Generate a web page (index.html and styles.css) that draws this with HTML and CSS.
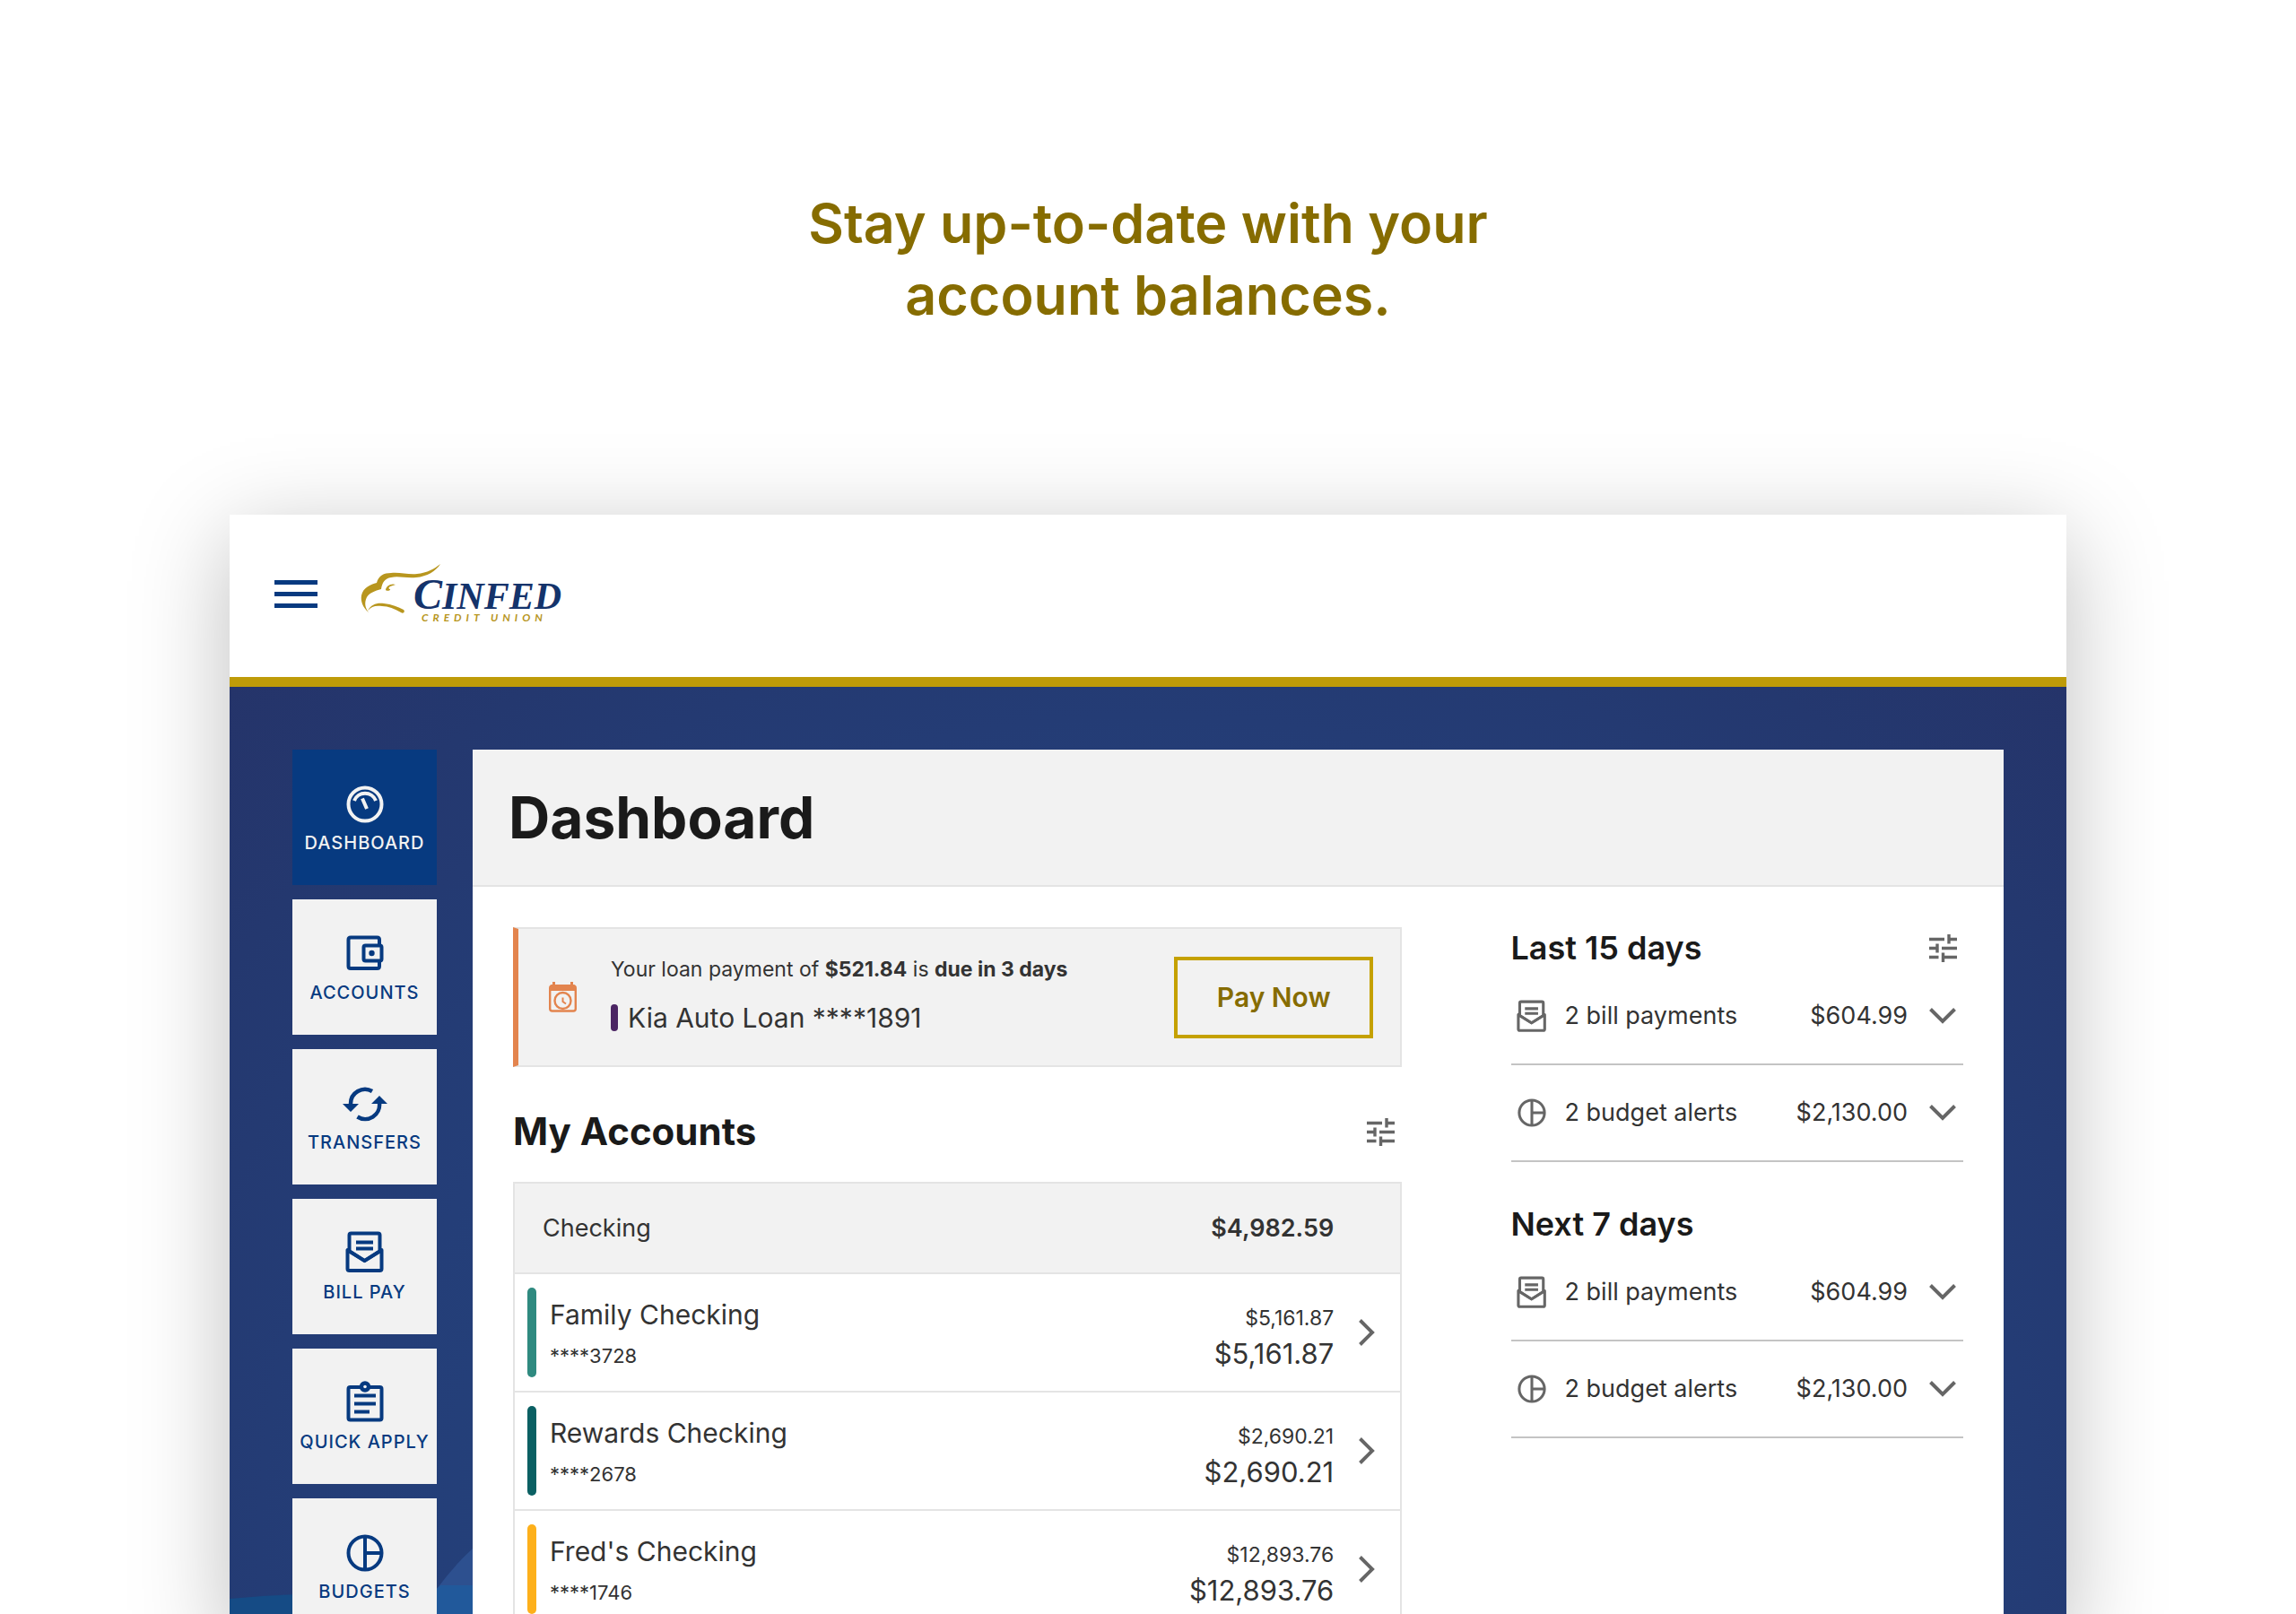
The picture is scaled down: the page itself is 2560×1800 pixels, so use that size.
FILE: index.html
```html
<!DOCTYPE html>
<html lang="en">
<head>
    <meta charset="UTF-8">
    <meta name="viewport" content="width=device-width, initial-scale=1.0">
    <title>Cinfed Credit Union</title>
    <link rel="stylesheet" href="styles.css">
</head>
<body>
    <!-- Shared icons -->
    <svg class="sprite" aria-hidden="true">
        <symbol id="icon-mail" viewBox="0 0 44 46">
            <path d="M2.500 21V42Q2.500 44 4.500 44H38.500Q40.500 44 40.500 42V21L21.500 33Z" fill="none" stroke="currentColor" stroke-width="4" stroke-linejoin="round"/>
            <path d="M5 20V6H38V20L21.500 31Z" fill="var(--icon-back)"/>
            <path d="M4.500 21V4.500Q4.500 2.500 6.500 2.500H36.500Q38.500 2.500 38.500 4.500V21M3 21.500L21.500 33L40 21.500" fill="none" stroke="currentColor" stroke-width="4"/>
            <path d="M12 12.500H31M12 19.500H31" stroke="currentColor" stroke-width="4"/>
        </symbol>
        <symbol id="icon-budget" viewBox="0 0 42 42">
            <circle cx="21" cy="21" r="18.500" fill="none" stroke="currentColor" stroke-width="4"/>
            <path d="M21 3V39M21 21H39" stroke="currentColor" stroke-width="4"/>
        </symbol>
        <symbol id="icon-tune" viewBox="0 0 31 31">
            <path d="M0 5.500H17M22 0V10.500M23 5.500H31M0 15.500H9M9 10.500V20.500M14 15.500H31M0 25.500H10.500M15.500 20.500V31M16 25.500H31" fill="none" stroke="currentColor" stroke-width="3.400"/>
        </symbol>
        <symbol id="icon-down" viewBox="0 0 30 18">
            <path d="M1.500 1.500L15 15L28.500 1.500" fill="none" stroke="currentColor" stroke-width="4"/>
        </symbol>
        <symbol id="icon-right" viewBox="0 0 18 30">
            <path d="M1.500 1.500L15 15L1.500 28.500" fill="none" stroke="currentColor" stroke-width="4"/>
        </symbol>
    </svg>

    <h1 class="headline">Stay up-to-date with your<br>account balances.</h1>

    <div class="window">
        <header class="topbar">
            <button class="menu-button" type="button" aria-label="Menu">
                <span></span>
                <span></span>
                <span></span>
            </button>
            <a class="logo" href="#" aria-label="Cinfed Credit Union">
                <svg viewBox="0 0 226 68" width="226" height="68">
                    <g fill="#b8961e">
                        <path d="M9 55C2 49 0 42 1 36C3 27 11 24 18 22C20 14 26 11 34 11C44 10 53 13 63 12C74 11 83 6 89 1C84 9 74 15 62 16C50 17 42 14 34 16C27 17 24 22 23 29C16 31 10 33 7 38C4 44 5 50 9 55Z"/>
                        <path d="M8 53C12 46 18 44 26 45C35 46 42 49 48 52C50 54 48 57 45 55C38 51 31 48 24 48C17 47 12 48 8 53Z"/>
                        <path d="M39 24C34 22 28 26 28 30C30 32 34 30 33 29C31 29 31 27 33 26Z"/>
                    </g>
                    <text class="logo-name" x="59" y="51"><tspan font-size="48">C</tspan><tspan font-size="42">INFED</tspan></text>
                    <text class="logo-sub" x="68" y="65">CREDIT UNION</text>
                </svg>
            </a>
        </header>

        <div class="stage">
            <svg class="waves" viewBox="0 0 2048 1034" preserveAspectRatio="none" aria-hidden="true">
                <path d="M231 1006Q250 980 271 961H300V1034H231Z" fill="#2d508f"/>
                <path d="M0 1017Q40 1013 80 1012V1034H0Z" fill="#154b85"/>
                <path d="M231 1006L235 1002H300V1034H231Z" fill="#21599b"/>
            </svg>

            <nav class="sidebar">
                <a class="nav-item active" href="#">
                    <svg viewBox="0 0 42 42" width="42" height="42">
                        <circle cx="21" cy="21" r="18.500" fill="none" stroke="currentColor" stroke-width="4"/>
                        <path d="M9 17C13 6 29 6 33 17M18 14.500L23 26" fill="none" stroke="currentColor" stroke-width="4"/>
                    </svg>
                    Dashboard
                </a>
                <a class="nav-item" href="#">
                    <svg viewBox="0 0 42 42" width="42" height="42">
                        <path d="M37 10V5Q37 2.500 34.500 2.500H5Q2.500 2.500 2.500 5V34.500Q2.500 37 5 37H34.500Q37 37 37 34.500V30" fill="none" stroke="currentColor" stroke-width="4"/>
                        <rect x="19.500" y="11.500" width="20" height="17" rx="2" fill="none" stroke="currentColor" stroke-width="4"/>
                        <circle cx="28.500" cy="20" r="3.200" fill="currentColor"/>
                    </svg>
                    Accounts
                </a>
                <a class="nav-item" href="#">
                    <svg viewBox="0 0 50 40" width="50" height="40">
                        <path d="M9 19A16 16 0 0 1 33 5M41 18A16 16 0 0 1 16.500 33.500" fill="none" stroke="currentColor" stroke-width="4.500"/>
                        <path d="M0 19H18L9 28ZM32 19H50L41 10Z" fill="currentColor"/>
                    </svg>
                    Transfers
                </a>
                <a class="nav-item" href="#">
                    <svg width="44" height="46"><use href="#icon-mail"/></svg>
                    Bill Pay
                </a>
                <a class="nav-item" href="#">
                    <svg viewBox="0 0 42 46" width="42" height="46">
                        <rect x="2.500" y="7" width="37" height="36.500" rx="2" fill="none" stroke="currentColor" stroke-width="4"/>
                        <circle cx="21" cy="6.500" r="6.200" fill="currentColor"/>
                        <circle cx="21" cy="6.500" r="1.800" fill="#f2f2f2"/>
                        <path d="M9 16.500H33M9 25.500H33M9 34.500H26" stroke="currentColor" stroke-width="4.200"/>
                    </svg>
                    Quick Apply
                </a>
                <a class="nav-item" href="#">
                    <svg width="42" height="42"><use href="#icon-budget"/></svg>
                    Budgets
                </a>
            </nav>

            <main class="panel">
                <h2 class="panel-title">Dashboard</h2>

                <div class="panel-body">
                    <div class="main-column">
                        <section class="alert">
                            <svg class="alert-icon" viewBox="0 0 31 34" width="31" height="34">
                                <rect x="1.200" y="4.500" width="28.600" height="28" rx="2.500" fill="none" stroke="currentColor" stroke-width="2.400"/>
                                <path d="M1 10V5.500Q1 3 3.500 3H4V0H7V3H24V0H27V3Q30 3 30 5.500V10Z" fill="currentColor"/>
                                <circle cx="15.500" cy="21" r="9" fill="none" stroke="currentColor" stroke-width="2.400"/>
                                <path d="M15.500 17.500V22L19 24.500" fill="none" stroke="currentColor" stroke-width="2"/>
                            </svg>
                            <div class="alert-text">
                                <p class="alert-message">Your loan payment of <b>$521.84</b> is <b>due in 3 days</b></p>
                                <p class="loan-name">Kia Auto Loan ****1891</p>
                            </div>
                            <button class="pay-button" type="button">Pay Now</button>
                        </section>

                        <div class="section-head">
                            <h3 class="section-title">My Accounts</h3>
                            <button class="icon-button" type="button" aria-label="Account settings">
                                <svg width="31" height="31"><use href="#icon-tune"/></svg>
                            </button>
                        </div>

                        <div class="accounts">
                            <div class="group-row">
                                <span>Checking</span>
                                <strong>$4,982.59</strong>
                            </div>
                            <a class="account-row" href="#">
                                <span class="stripe teal"></span>
                                <span class="account-info">
                                    <span class="account-name">Family Checking</span>
                                    <span class="account-number">****3728</span>
                                </span>
                                <span class="account-amount">
                                    <span class="available">$5,161.87</span>
                                    <span class="balance">$5,161.87</span>
                                </span>
                                <svg width="18" height="30"><use href="#icon-right"/></svg>
                            </a>
                            <a class="account-row" href="#">
                                <span class="stripe dark-teal"></span>
                                <span class="account-info">
                                    <span class="account-name">Rewards Checking</span>
                                    <span class="account-number">****2678</span>
                                </span>
                                <span class="account-amount">
                                    <span class="available">$2,690.21</span>
                                    <span class="balance">$2,690.21</span>
                                </span>
                                <svg width="18" height="30"><use href="#icon-right"/></svg>
                            </a>
                            <a class="account-row" href="#">
                                <span class="stripe amber"></span>
                                <span class="account-info">
                                    <span class="account-name">Fred's Checking</span>
                                    <span class="account-number">****1746</span>
                                </span>
                                <span class="account-amount">
                                    <span class="available">$12,893.76</span>
                                    <span class="balance">$12,893.76</span>
                                </span>
                                <svg width="18" height="30"><use href="#icon-right"/></svg>
                            </a>
                        </div>
                    </div>

                    <aside class="side-column">
                        <section class="summary">
                            <div class="summary-head">
                                <h3 class="summary-title">Last 15 days</h3>
                                <button class="icon-button" type="button" aria-label="Summary settings">
                                    <svg width="31" height="31"><use href="#icon-tune"/></svg>
                                </button>
                            </div>
                            <button class="summary-row" type="button">
                                <svg width="34" height="36"><use href="#icon-mail"/></svg>
                                <span class="row-label">2 bill payments</span>
                                <span>$604.99</span>
                                <svg class="chevron" width="30" height="18"><use href="#icon-down"/></svg>
                            </button>
                            <button class="summary-row" type="button">
                                <svg width="34" height="32"><use href="#icon-budget"/></svg>
                                <span class="row-label">2 budget alerts</span>
                                <span>$2,130.00</span>
                                <svg class="chevron" width="30" height="18"><use href="#icon-down"/></svg>
                            </button>
                        </section>
                        <section class="summary">
                            <div class="summary-head">
                                <h3 class="summary-title">Next 7 days</h3>
                            </div>
                            <button class="summary-row" type="button">
                                <svg width="34" height="36"><use href="#icon-mail"/></svg>
                                <span class="row-label">2 bill payments</span>
                                <span>$604.99</span>
                                <svg class="chevron" width="30" height="18"><use href="#icon-down"/></svg>
                            </button>
                            <button class="summary-row" type="button">
                                <svg width="34" height="32"><use href="#icon-budget"/></svg>
                                <span class="row-label">2 budget alerts</span>
                                <span>$2,130.00</span>
                                <svg class="chevron" width="30" height="18"><use href="#icon-down"/></svg>
                            </button>
                        </section>
                    </aside>
                </div>
            </main>
        </div>
    </div>
</body>
</html>
```
FILE: styles.css
```css
* {
    box-sizing: border-box;
}

body {
    --icon-back: #fff;
    display: flex;
    flex-direction: column;
    height: 100vh;
    margin: 0;
    overflow: hidden;
    background-color: #fff;
    color: #333;
    font-family: Inter, "Liberation Sans", sans-serif;
    font-size: 27px;
    line-height: 32px;
}

h1, h2, h3, p {
    margin: 0;
}

a {
    color: inherit;
    text-decoration: none;
}

button {
    padding: 0;
    border: 0;
    background: none;
    color: inherit;
    font: inherit;
    cursor: pointer;
}

svg {
    flex: none;
    display: block;
}

.sprite {
    position: absolute;
    width: 0;
    height: 0;
}

.headline {
    padding: 209px 0 205px;
    color: #866c00;
    font-size: 61px;
    font-weight: 600;
    line-height: 80px;
    text-align: center;
}

.window {
    display: flex;
    flex-direction: column;
    flex: 1 0 auto;
    width: 80%;
    margin: 0 auto;
    box-shadow: 0 24px 100px rgba(0, 0, 0, 0.26);
}

/* Top bar */
.topbar {
    display: flex;
    align-items: center;
    gap: 48px;
    height: 192px;
    padding: 0 50px 5px;
    border-bottom: 11px solid #be9b08;
    background-color: #fff;
}

.menu-button {
    display: flex;
    flex-direction: column;
    gap: 8px;
    width: 48px;
}

.menu-button span {
    height: 5px;
    background-color: #073a80;
}

.logo-name {
    fill: #14336b;
    font-family: "Liberation Serif", serif;
    font-style: italic;
    font-weight: 700;
}

.logo-sub {
    fill: #b8961e;
    font-family: Lato, sans-serif;
    font-size: 12px;
    font-style: italic;
    font-weight: 700;
    letter-spacing: 5px;
}

/* Blue area below the top bar */
.stage {
    position: relative;
    display: flex;
    flex: 1;
    gap: 40px;
    padding: 70px 70px 0;
    background: radial-gradient(ellipse at 50% 90%, #244880 0%, #243e78 60%, #24386f 85%, #25346a 100%);
}

.waves {
    position: absolute;
    left: 0;
    top: 0;
    width: 100%;
    height: 1034px;
}

/* Sidebar */
.sidebar {
    --icon-back: #f2f2f2;
    position: relative;
    display: flex;
    flex-direction: column;
    gap: 16px;
    width: 161px;
}

.nav-item {
    display: flex;
    flex-direction: column;
    align-items: center;
    justify-content: flex-end;
    gap: 10px;
    height: 151px;
    padding-bottom: 35px;
    background-color: #f2f2f2;
    color: #073a80;
    font-size: 20px;
    font-weight: 500;
    line-height: 24px;
    letter-spacing: 1px;
    text-transform: uppercase;
}

.nav-item.active {
    background-color: #073a80;
    color: #f2f2f2;
}

/* Panel */
.panel {
    position: relative;
    flex: 1;
    background-color: #fff;
}

.panel-title {
    padding: 38px 40px 37px;
    border-bottom: 2px solid #e4e4e4;
    background-color: #f2f2f2;
    color: #1a1a1a;
    font-size: 64px;
    font-weight: 700;
    line-height: 76px;
}

.panel-body {
    display: flex;
    justify-content: space-between;
    padding: 45px 45px 0;
}

.main-column {
    flex: 0 0 61.3%;
}

.side-column {
    flex: 0 0 31.2%;
}

/* Payment alert */
.alert {
    display: flex;
    align-items: center;
    height: 156px;
    padding: 0 30px 0 34px;
    border: 2px solid #e4e4e4;
    border-left: 6px solid #e3844e;
    background-color: #f2f2f2;
}

.alert-icon {
    color: #e3844e;
}

.alert-text {
    flex: 1;
    display: flex;
    flex-direction: column;
    gap: 18px;
    padding: 0 0 4px 38px;
}

.alert-message {
    font-size: 23px;
}

.loan-name {
    position: relative;
    padding-left: 19px;
    font-size: 30px;
    line-height: 40px;
}

.loan-name::before {
    content: "";
    position: absolute;
    left: 0;
    top: 5px;
    width: 8px;
    height: 30px;
    border-radius: 4px;
    background-color: #4b2563;
}

.pay-button {
    width: 222px;
    height: 91px;
    border: 4px solid #c5a100;
    color: #866c00;
    font-size: 30px;
    font-weight: 600;
}

/* Accounts */
.section-head {
    display: flex;
    align-items: center;
    justify-content: space-between;
    height: 128px;
    padding: 16px 8px 0 0;
}

.section-title {
    color: #1a1a1a;
    font-size: 42px;
    font-weight: 700;
}

.icon-button {
    color: #666;
}

.accounts {
    border: 2px solid #e4e4e4;
}

.group-row {
    display: flex;
    align-items: center;
    justify-content: space-between;
    height: 99px;
    padding: 0 74px 0 31px;
    background-color: #f2f2f2;
}

.group-row strong {
    font-weight: 600;
}

.account-row {
    display: flex;
    align-items: center;
    height: 132px;
    padding: 0 28px 0 14px;
    border-top: 2px solid #e4e4e4;
}

.account-row svg {
    color: #666;
}

.stripe {
    width: 10px;
    height: 100px;
    border-radius: 5px;
}

.teal {
    background-color: #2f8a80;
}

.dark-teal {
    background-color: #0b6063;
}

.amber {
    background-color: #fdb01b;
}

.account-info,
.account-amount {
    display: flex;
    flex-direction: column;
}

.account-info {
    flex: 1;
    gap: 10px;
    padding: 2px 0 0 15px;
}

.account-name {
    font-size: 30px;
    line-height: 40px;
}

.account-number {
    font-size: 22px;
}

.account-amount {
    align-items: flex-end;
    gap: 4px;
    padding: 12px 28px 0 0;
}

.available {
    font-size: 23px;
}

.balance {
    font-size: 31px;
    line-height: 40px;
}

/* Summary column */
.summary {
    margin-bottom: 46px;
}

.summary-head {
    display: flex;
    align-items: center;
    justify-content: space-between;
    height: 46px;
    padding-right: 7px;
}

.summary-title {
    color: #1a1a1a;
    font-size: 36px;
    font-weight: 600;
}

.summary-row {
    display: flex;
    align-items: center;
    width: 100%;
    height: 108px;
    padding: 0 8px 0 6px;
    border-bottom: 2px solid #c4c4c4;
    text-align: left;
}

.summary-row svg {
    color: #666;
}

.row-label {
    flex: 1;
    padding-left: 20px;
}

.chevron {
    margin-left: 24px;
}
```
